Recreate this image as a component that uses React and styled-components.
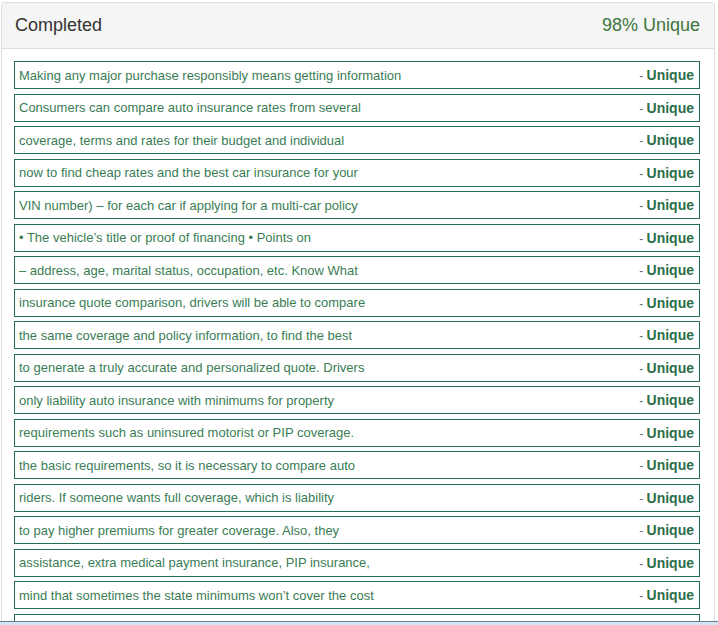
import React from "react";
import styled, { createGlobalStyle } from "styled-components";

const GlobalStyle = createGlobalStyle`
	html, body {
		margin: 0;
		padding: 0;
		background: #fff;
		overflow: hidden;
	}
	body {
		font-family: "Liberation Sans", Arial, sans-serif;
	}
`;

const Panel = styled.div`
	width: 714px;
	margin: 2px 0 0 1px;
	border: 1px solid #dddddd;
	border-radius: 3px;
	box-sizing: border-box;
	background: #fff;
`;

const Heading = styled.div`
	display: flex;
	justify-content: space-between;
	align-items: center;
	height: 45px;
	padding: 0 14px 0 13px;
	background: #f5f5f5;
	border-bottom: 1px solid #dddddd;
	font-size: 18px;
`;

const Title = styled.span`
	color: #333333;
`;

const Score = styled.span`
	color: #3c763d;
`;

const Body = styled.div`
	padding: 12px 14px 0 12px;
`;

const List = styled.ul`
	list-style: none;
	margin: 0;
	padding: 0;
	display: flex;
	flex-direction: column;
	gap: 4.5px;
`;

const Row = styled.li`
	display: flex;
	justify-content: space-between;
	align-items: center;
	height: 28px;
	box-sizing: border-box;
	padding: 0 5px 0 4px;
	border: 1px solid #24704e;
	font-size: 13px;
	color: #3a7d55;
	white-space: nowrap;
`;

const Verdict = styled.span`
	color: #2b6e49;
	font-weight: bold;
	font-size: 14px;

	&::before {
		content: "- ";
		font-weight: normal;
		font-size: 12px;
		color: #6a6a6a;
	}
`;

const StatusBar = styled.div`
	position: fixed;
	left: 0;
	right: 0;
	bottom: 0;
	height: 3px;
	border-top: 1px solid #6d7e8c;
	background: #d4e5f3;
`;

const sentences = [
	"Making any major purchase responsibly means getting information",
	"Consumers can compare auto insurance rates from several",
	"coverage, terms and rates for their budget and individual",
	"now to find cheap rates and the best car insurance for your",
	"VIN number) \u2013 for each car if applying for a multi-car policy",
	"\u2022 The vehicle\u2019s title or proof of financing \u2022 Points on",
	"\u2013 address, age, marital status, occupation, etc. Know What",
	"insurance quote comparison, drivers will be able to compare",
	"the same coverage and policy information, to find the best",
	"to generate a truly accurate and personalized quote. Drivers",
	"only liability auto insurance with minimums for property",
	"requirements such as uninsured motorist or PIP coverage.",
	"the basic requirements, so it is necessary to compare auto",
	"riders. If someone wants full coverage, which is liability",
	"to pay higher premiums for greater coverage. Also, they",
	"assistance, extra medical payment insurance, PIP insurance,",
	"mind that sometimes the state minimums won\u2019t cover the cost",
	"of a fender bender, and a serious accident could easily exceed",
];

const App = () => {
	return (
		<>
			<GlobalStyle />
			<Panel>
				<Heading>
					<Title>Completed</Title>
					<Score>98% Unique</Score>
				</Heading>
				<Body>
					<List>
						{sentences.map((s, i) => (
							<Row key={i}>
								<span>{s}</span>
								<Verdict>Unique</Verdict>
							</Row>
						))}
					</List>
				</Body>
			</Panel>
			<StatusBar />
		</>
	);
};

export default App;
